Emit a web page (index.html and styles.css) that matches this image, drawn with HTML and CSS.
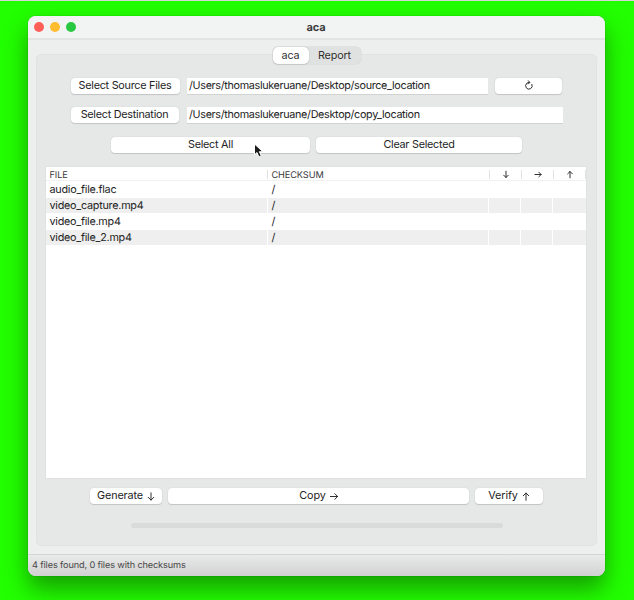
FILE: index.html
```html
<!DOCTYPE html>
<html lang="en">
<head>
<meta charset="utf-8">
<title>aca</title>
<link rel="stylesheet" href="styles.css">
</head>
<body>
<main class="window">
  <header class="titlebar">
    <div class="lights"><i class="close"></i><i class="minimize"></i><i class="zoom"></i></div>
    <h1>aca</h1>
  </header>
  <div class="content">
    <nav class="tabs"><button class="tab active">aca</button><button class="tab">Report</button></nav>
    <section class="pane">
      <div class="row source">
        <button class="btn">Select Source Files</button>
        <div class="field">/Users/thomaslukeruane/Desktop/source_location</div>
        <button class="btn" aria-label="Refresh"><svg class="refresh" viewBox="0 0 10 11"><path d="M2.9 3.2A3.3 3.3 0 1 0 7.9 4.4M2.9 3.2Q3.8 2.2 5.6 2.3M4.3.7l1.5 1.6-1.4 1.6"/></svg></button>
      </div>
      <div class="row destination">
        <button class="btn">Select Destination</button>
        <div class="field">/Users/thomaslukeruane/Desktop/copy_location</div>
      </div>
      <div class="row selection">
        <button class="btn">Select All</button>
        <button class="btn">Clear Selected</button>
      </div>
      <div class="table">
        <div class="tr head">
          <span>FILE</span><span>CHECKSUM</span>
          <span><svg class="arrow" viewBox="0 0 8 9"><path d="M4 1.2v6.3M1.7 5.2 4 7.5l2.3-2.3"/></svg></span>
          <span><svg class="arrow" viewBox="0 0 8 9"><path d="M.9 4.5h6.2M4.8 2.2l2.3 2.3-2.3 2.3"/></svg></span>
          <span><svg class="arrow" viewBox="0 0 8 9"><path d="M4 7.8V1.5M1.7 3.8 4 1.5l2.3 2.3"/></svg></span>
        </div>
        <div class="tr"><span>audio_file.flac</span><span>/</span><span></span><span></span><span></span></div>
        <div class="tr alt"><span>video_capture.mp4</span><span>/</span><span></span><span></span><span></span></div>
        <div class="tr"><span>video_file.mp4</span><span>/</span><span></span><span></span><span></span></div>
        <div class="tr alt"><span>video_file_2.mp4</span><span>/</span><span></span><span></span><span></span></div>
      </div>
      <div class="row actions">
        <button class="btn">Generate <svg class="arrow" viewBox="0 0 8 9"><path d="M4 .8v7.3M1.2 5.3 4 8.1l2.8-2.8"/></svg></button>
        <button class="btn">Copy <svg class="arrow" viewBox="0 0 8 9"><path d="M.4 4.5h7.2M4.8 1.7l2.8 2.8-2.8 2.8"/></svg></button>
        <button class="btn">Verify <svg class="arrow" viewBox="0 0 8 9"><path d="M4 8.3V1M1.2 3.8 4 1l2.8 2.8"/></svg></button>
      </div>
      <div class="progress"></div>
    </section>
  </div>
  <footer class="status">4 files found, 0 files with checksums</footer>
  <svg class="cursor" viewBox="0 0 12 16"><path d="M1.5 1v10.8l2.5-2.3 1.9 4.4 2.4-1-1.9-4.2h3.5z"/></svg>
</main>
</body>
</html>
```
FILE: styles.css
```css
* { box-sizing: border-box; }

body {
  margin: 0;
  height: 600px;
  overflow: hidden;
  padding: 15px 0 0 28px;
  border-top: 1px solid #d5d5d5;
  background: #22ff00;
  color: #242424;
  font: 10.8px/16px Inter, "Liberation Sans", sans-serif;
  letter-spacing: -.25px;
  text-rendering: geometricPrecision;
}

.window {
  position: relative;
  display: flex;
  flex-direction: column;
  width: 577px;
  height: 560px;
  border-radius: 8px;
  background: #edefee;
  box-shadow: 0 0 1px rgba(0, 0, 0, .5), 0 13px 24px rgba(0, 0, 0, .38);
}

.titlebar {
  display: flex;
  align-items: center;
  height: 24px;
  padding: 0 0 1px 6px;
  border-bottom: 2px solid #e2e4e3;
  border-radius: 8px 8px 0 0;
  background: #f2f4f4;
}

.lights { display: flex; gap: 6px; width: 58px; }
.lights i { width: 10px; height: 10px; border-radius: 50%; }
.close { background: #ff5f57; }
.minimize { background: #febc2e; }
.zoom { background: #28c840; }

h1 {
  flex: 1;
  margin: 0;
  padding-right: 65px;
  text-align: center;
  color: #3b3b3b;
  font-size: 11px;
  font-weight: 700;
  letter-spacing: -.1px;
}

.content {
  display: flex;
  flex-direction: column;
  align-items: center;
  height: 514px;
  padding: 7px 8px 0;
}

.tabs {
  z-index: 1;
  display: flex;
  width: 88px;
  height: 17px;
  border-radius: 5px;
  background: #e0e2e1;
  box-shadow: 0 0 0 .5px #d6d8d7;
}

.tab {
  flex: 1;
  padding: 0;
  border: 0;
  border-radius: 5px;
  background: none;
  color: #303030;
  font: inherit;
  line-height: 17px;
  letter-spacing: -.15px;
}

.tab.active {
  flex: 0 0 36px;
  background: #fff;
  box-shadow: 0 0 1px 0 #999, 0 1px 1px #ccc;
}

.pane {
  width: 561px;
  height: 492px;
  margin-top: -10px;
  padding: 23px 10px 0 9px;
  border: 1px solid #e1e3e2;
  border-radius: 5px;
  background: #e6e8e7;
}

.row { display: grid; height: 17px; }
.source { grid-template-columns: 109px 301px 67px; gap: 7px; margin-left: 25px; }
.destination { grid-template-columns: 108px 376px; gap: 8px; margin: 12px 0 0 25px; }
.selection { grid-template-columns: 199px 206px; gap: 6px; margin: 13px 0 0 65px; }
.actions { grid-template-columns: 72px 301px 68px; gap: 6px; margin: 10px 0 0 44px; height: 16px; }

.btn {
  display: flex;
  align-items: center;
  justify-content: center;
  padding: 0 0 1px;
  border: 0;
  border-radius: 4px;
  background: #fff;
  box-shadow: 0 0 1px #bbb, 0 1px 1px #c4c6c5;
  color: #242424;
  font: inherit;
  letter-spacing: inherit;
  white-space: pre;
}

.source .btn, .destination .btn, .selection .btn { height: 16px; }
.source .btn:first-child, .destination .btn { padding-right: 1px; }
.actions .btn { padding-bottom: 0; letter-spacing: -.1px; }

.field {
  padding-left: 2px;
  border-bottom: 1px solid #d1d3d2;
  background: #fff;
  line-height: 16px;
  letter-spacing: -.33px;
  white-space: nowrap;
}

.table {
  height: 311px;
  margin-top: 13px;
  background: #fff;
  box-shadow: 0 0 0 1px #dfe2e1, 0 1px 0 #c8caca;
}

.tr {
  display: grid;
  grid-template-columns: 221px 220px 31px 31px 33px;
  gap: 1px;
  height: 16px;
}

.tr span { padding-left: 3.5px; line-height: 18px; }
.tr.alt span { height: 15px; margin-top: 1px; background: #efefef; line-height: 16px; }

.tr.head {
  grid-template-columns: 222px 222px 32px 32px 32px;
  gap: 0;
  height: 14px;
  border-bottom: 1px solid #f1f1f1;
  color: #383838;
  font-size: 9.2px;
  letter-spacing: -.1px;
}

.tr.head span {
  height: 9px;
  margin-top: 3px;
  border-right: 1px solid #e2e2e2;
  line-height: 11px;
}

.tr.head span:nth-child(n+3) { display: flex; align-items: center; justify-content: center; padding: 0; }

.arrow { width: 8px; height: 9px; }
.actions .arrow { margin-left: 1px; }
.refresh { width: 10px; height: 11px; }

.arrow path, .refresh path {
  fill: none;
  stroke: #303030;
  stroke-width: 1;
  stroke-linecap: round;
  stroke-linejoin: round;
}

.progress {
  width: 372px;
  height: 5px;
  margin: 19px 0 0 85px;
  border-radius: 3px;
  background: #d9dbda;
}

.status {
  height: 22px;
  padding-left: 4px;
  border-top: 1px solid #d4d6d5;
  border-radius: 0 0 8px 8px;
  background: linear-gradient(#e9eaea, #d1d1d1);
  color: #484848;
  font-size: 9.2px;
  letter-spacing: -.14px;
  line-height: 22px;
}

.cursor {
  position: absolute;
  left: 225px;
  top: 127px;
  width: 12px;
  height: 16px;
}

.cursor path { fill: #1c1c1c; stroke: #fff; stroke-width: 1; }
```
